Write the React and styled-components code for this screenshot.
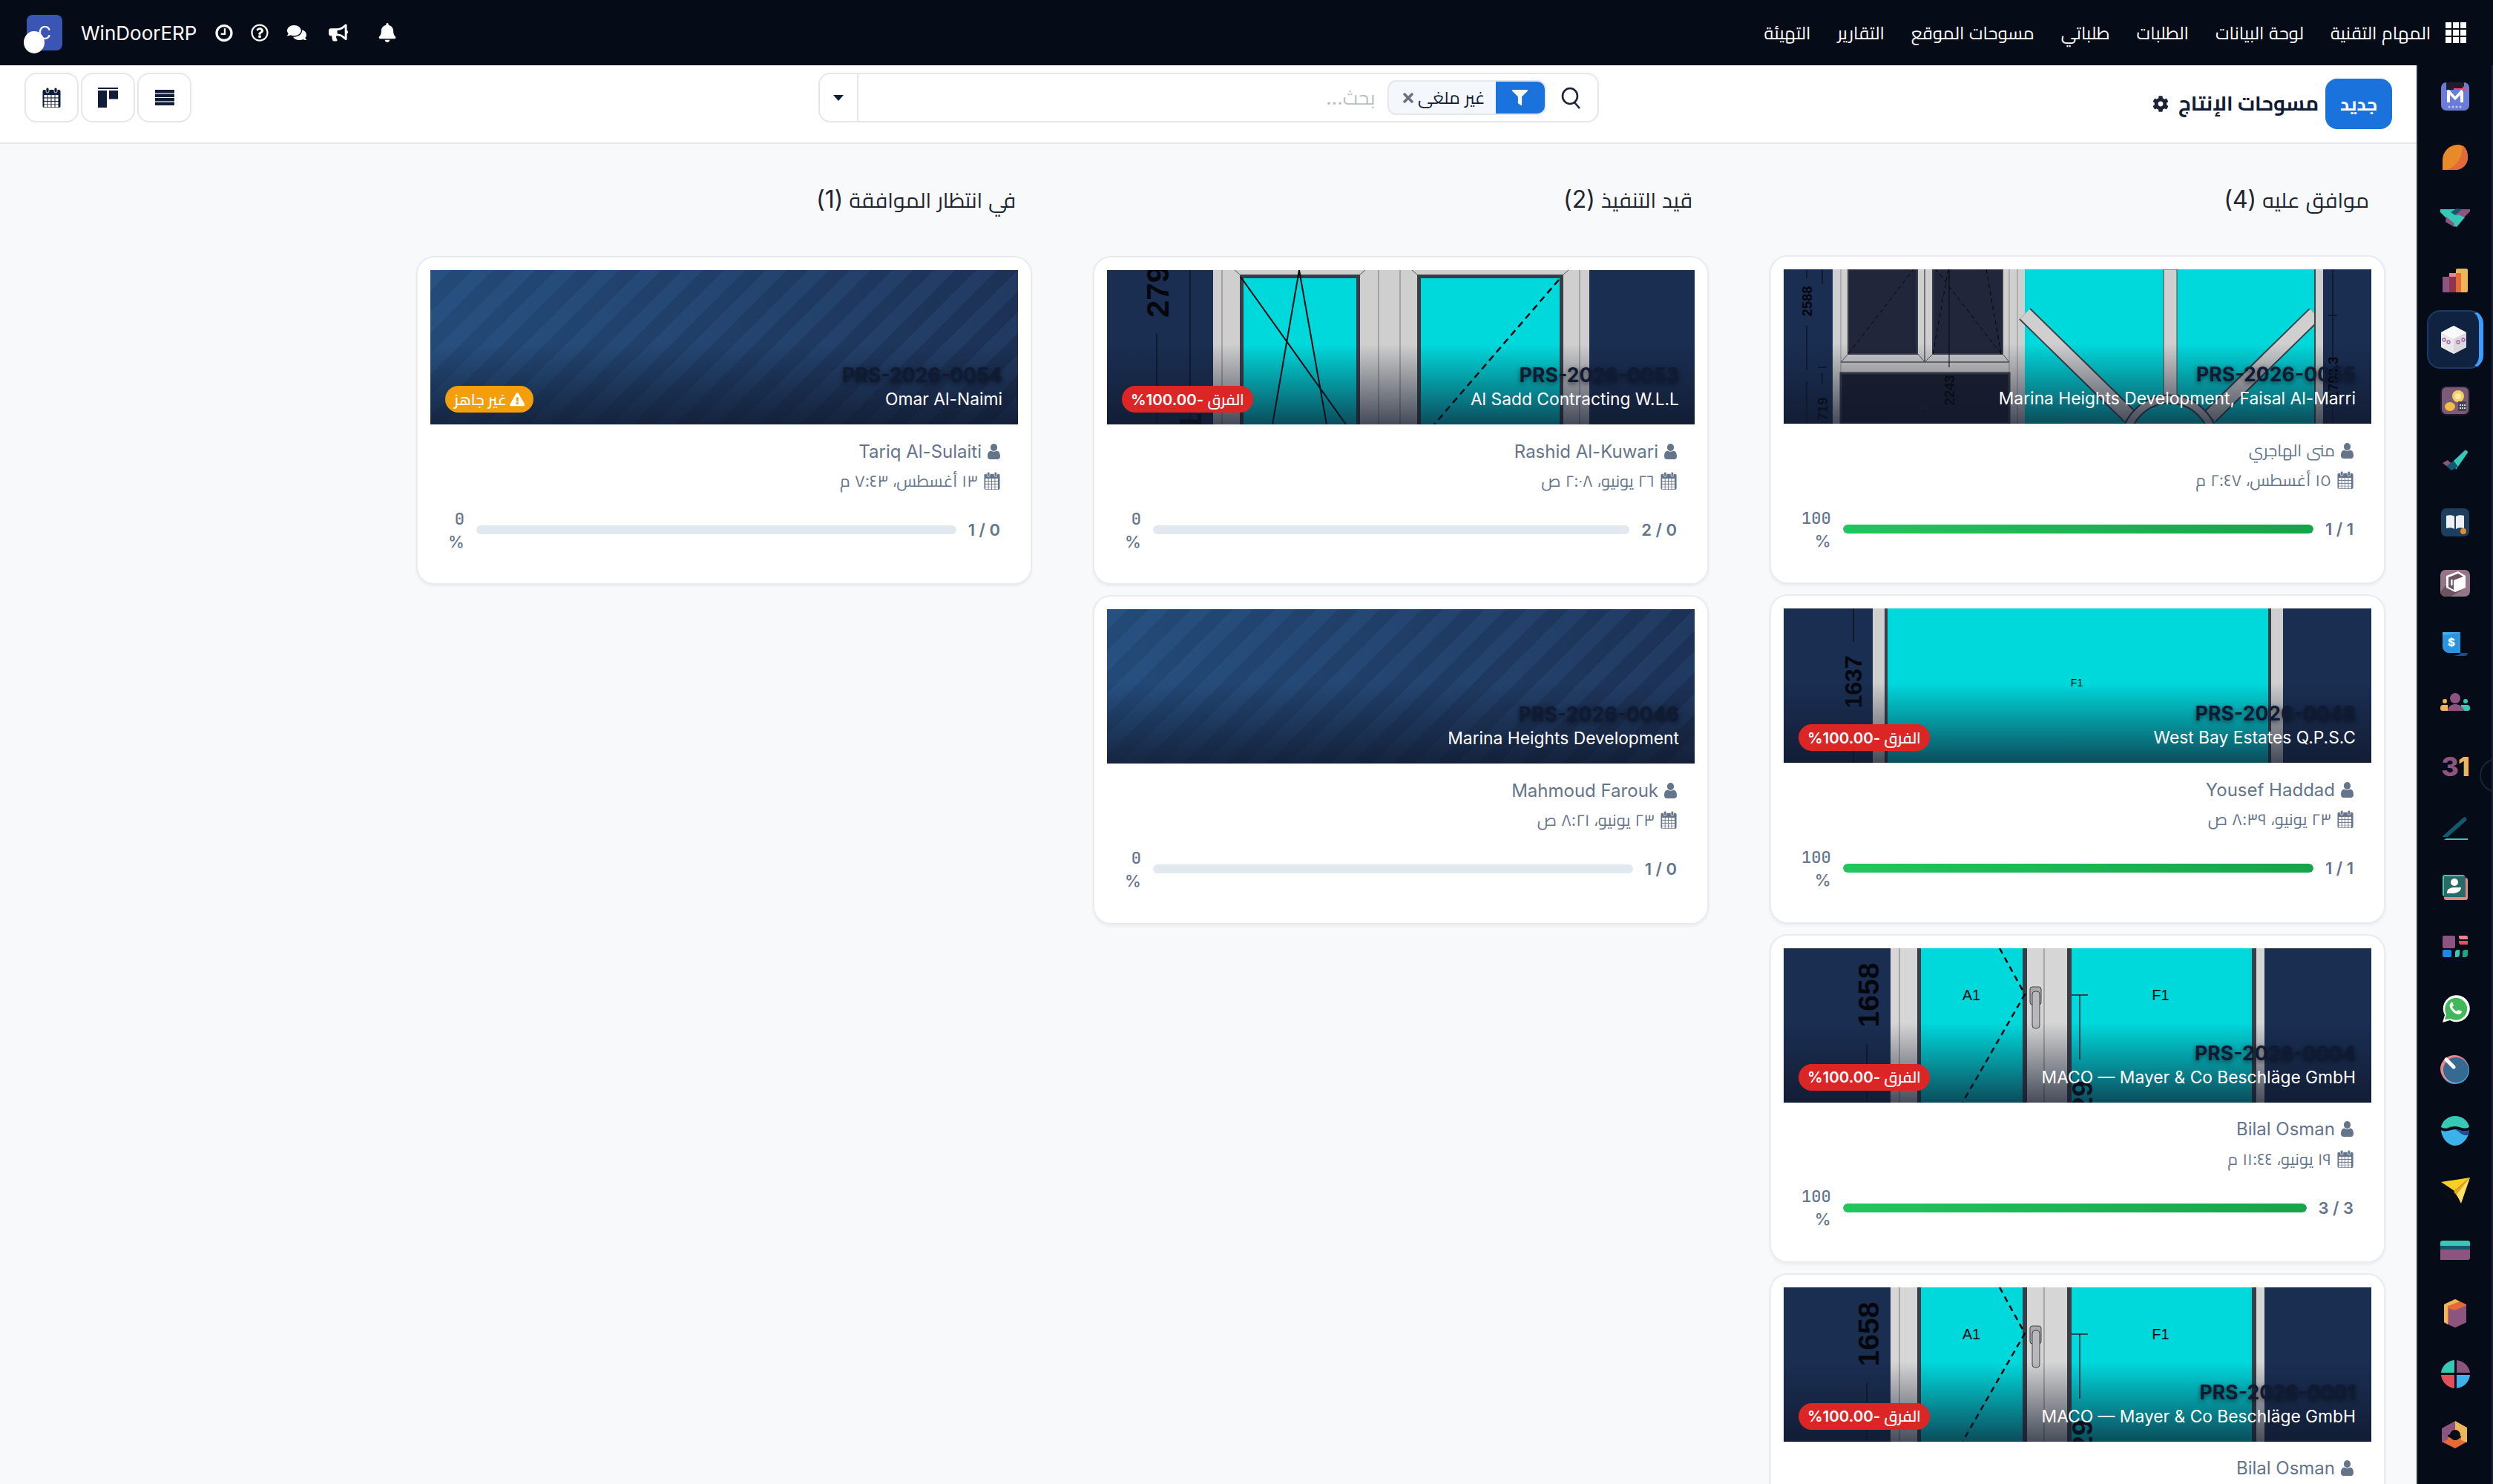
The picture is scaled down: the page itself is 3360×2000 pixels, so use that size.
import React from "react";
import styled, { createGlobalStyle } from "styled-components";
import { FaRegQuestionCircle, FaComments, FaBullhorn, FaBell, FaCog, FaFilter, FaTimes, FaExclamationTriangle } from "react-icons/fa";

const SANS = `Inter, Cairo, "Noto Sans", sans-serif`;
const Global = createGlobalStyle`
  html, body { margin: 0; padding: 0; height: 100%; background: #f8f9fb; }
  * { box-sizing: border-box; }
  body { font-family: ${SANS}; }
  button, input { font-family: ${SANS}; }
`;

const Shell = styled.div`
  width: 3360px; height: 2000px; overflow: hidden; display: flex; flex-direction: column; direction: rtl;
`;
const Topbar = styled.header`
  height: 88px; flex: none; background: #060b18; color: #fff; display: flex; align-items: center;
  justify-content: space-between; padding: 0 36px;
`;
const Nav = styled.nav`display: flex; align-items: center; gap: 36px; font-size: 23.6px;`;
const AppsGrid = styled.span`
  width: 28px; height: 29px; display: grid; grid-template-columns: repeat(3, 1fr); grid-template-rows: repeat(3, 1fr); gap: 2px; margin-inline-end: -16px;
  i { background: #fff; display: block; }
`;
const NavLink = styled.span`color: #fff; white-space: nowrap;`;
const BrandGroup = styled.div`direction: ltr; display: flex; align-items: center;`;
const Logo = styled.div`
  position: relative; width: 48px; height: 48px; border-radius: 8px; background: #3b55b5; color: #fff;
  display: flex; align-items: center; justify-content: center; font-size: 24px;
`;
const LogoDot = styled.span`
  position: absolute; left: -4px; top: 22px; width: 28px; height: 30px; border-radius: 50%; background: #fff;
`;
const Brand = styled.span`font-size: 26px; margin: 0 25px; white-space: nowrap;`;
const TopIcon = styled.span`
  width: ${p => p.$w}px; margin-left: ${p => p.$ml || 0}px; display: flex; justify-content: center; font-size: 26px; color: #fff;
`;

const Body = styled.div`flex: 1; min-height: 0; display: flex;`;
const Rail = styled.aside`
  position: relative; width: 103px; flex: none; background: #060b18; border-left: 2px solid #1d2436; border-right: 2px solid #1d2436;
  display: flex; flex-direction: column; align-items: center; gap: 3px; padding-top: 2px; overflow: hidden;
`;
const RailItem = styled.div`
  width: 76px; height: 79px; flex: none; display: flex; align-items: center; justify-content: center; border-radius: 18px;
  ${p => p.$active && `background: #0f2340; border: 2px solid #1a3a63; border-right: 6px solid #3b9dff;`}
`;
const RailHandle = styled.span`
  position: absolute; top: 934px; right: -30px; width: 46px; height: 46px; border-radius: 50%; border: 2px solid #1d2436;
`;
const Content = styled.div`flex: 1; min-width: 0; display: flex; flex-direction: column;`;
const Toolbar = styled.div`
  height: 106px; flex: none; background: #fff; border-bottom: 2px solid #e5e7eb; display: grid;
  grid-template-columns: 1fr 1052px 1fr; align-items: start; padding: 10px 33px 0;
`;
const TitleGroup = styled.div`display: flex; align-items: center; gap: 9px; margin-top: 8px;`;
const NewButton = styled.button`
  width: 90px; height: 68px; border: 0; border-radius: 16px; background: #1a73dd; color: #fff; font-weight: 700; font-size: 24.5px; padding: 0;
`;
const PageTitle = styled.h1`margin: 0; padding-bottom: 3px; font-size: 27.4px; font-weight: 700; color: #111c36; white-space: nowrap;`;
const Gear = styled.span`display: flex; font-size: 22px; color: #1c2334; margin-right: 4px;`;
const Search = styled.div`
  height: 67px; width: 1052px; background: #fff; border: 2px solid #e5e7eb; border-radius: 16px; display: flex; align-items: center; overflow: hidden;
`;
const SearchIcon = styled.span`width: 69px; flex: none; display: flex; justify-content: center; color: #1c2334;`;
const Facet = styled.div`
  height: 47px; width: 214px; flex: none; display: flex; align-items: center; border-radius: 12px; border: 2px solid #e5e7eb; background: #f4f7fc; overflow: hidden;
`;
const FacetIcon = styled.span`
  width: 66px; height: 100%; background: #1a73dd; color: #fff; display: flex; align-items: center; justify-content: center; font-size: 21px; flex: none;
`;
const FacetLabel = styled.span`font-size: 23px; color: #111c36; margin-right: 14px; white-space: nowrap;`;
const FacetClose = styled.span`display: flex; color: #6b7280; font-size: 20px; margin-right: auto; margin-left: 16px;`;
const SearchInput = styled.input`
  flex: 1; min-width: 0; height: 100%; border: 0; outline: 0; background: transparent; padding: 0 16px; font-size: 26px; direction: rtl;
  &::placeholder { color: #b9bdc5; opacity: 1; }
`;
const DropToggle = styled.span`
  width: 52px; height: 100%; flex: none; border-right: 2px solid #e5e7eb; display: flex; align-items: center; justify-content: center;
  &::before { content: ""; border-top: 8px solid #111c36; border-left: 7px solid transparent; border-right: 7px solid transparent; }
`;
const ViewButtons = styled.div`display: flex; gap: 3px; direction: ltr;`;
const ViewButton = styled.button`
  width: 73px; height: 67px; background: #fff; border: 2px solid #e5e7eb; border-radius: 16px; padding: 0; display: flex; align-items: center; justify-content: center;
`;
const Board = styled.main`
  flex: 1; min-height: 0; overflow: hidden; display: flex; gap: 82px; padding: 52px 42px 0 0;
`;
const Column = styled.section`width: 830px; flex: none; display: flex; flex-direction: column; gap: 14px;`;
const ColumnHead = styled.h2`
  margin: 0 22px 37px 0; height: 48px; line-height: 46px; font-size: 28.5px; font-weight: 400; color: #1f2430; white-space: nowrap;
`;
const HeadCount = styled.span`font-size: 32px;`;
const Card = styled.article`
  width: 830px; height: 443.33px; flex: none; background: #fff; border: 2px solid #e9ebef; border-radius: 24px; padding: 17px;
  box-shadow: 0 2px 4px rgba(15,23,42,.06);
`;
const Thumb = styled.div`
  position: relative; height: 208px; overflow: hidden; background: #1a2e52;
  ${p => p.$empty && `background: repeating-linear-gradient(135deg, rgba(80,150,220,.09) 0 20px, transparent 20px 40px), linear-gradient(100deg, #234a78, #1c3054);`}
  svg { display: block; }
`;
const Shade = styled.div`
  position: absolute; inset: 0; background: linear-gradient(to top, rgba(15,23,42,.72) 0, rgba(15,23,42,0) 52%);
`;
const ThumbText = styled.div`
  position: absolute; right: 21px; bottom: 18px; display: flex; flex-direction: column; align-items: flex-start;
`;
const Ref = styled.div`
  font-size: 26.6px; line-height: 34px; font-weight: 700; color: #0f1a35; text-shadow: 0 2px 6px rgba(0,0,0,.6); white-space: nowrap;
`;
const Client = styled.div`font-size: 22.8px; line-height: 32px; color: #fff; white-space: nowrap;`;
const Badge = styled.span`
  position: absolute; left: 20px; bottom: 16px; height: 36px; padding: 0 12px; border-radius: 18px; background: ${p => p.$bg}; color: #fff;
  display: flex; align-items: center; gap: 4px; font-size: 20.5px; font-weight: 600; white-space: nowrap;
`;
const Details = styled.div`padding: 21px 24px 0; display: flex; flex-direction: column; gap: 10px;`;
const InfoRow = styled.div`
  height: 30px; display: flex; align-items: center; gap: 8px; color: #64748b; font-size: ${p => p.$size}px; white-space: nowrap;
`;
const Progress = styled.div`display: flex; align-items: center; gap: 16px; margin-top: 11px; height: 60px;`;
const Count = styled.span`font-size: 22px; font-weight: 600; color: #64748b; white-space: nowrap; flex: none;`;
const Track = styled.div`flex: 1; height: 12px; border-radius: 6px; background: #e2e8f0; overflow: hidden;`;
const Fill = styled.div`height: 100%; border-radius: 6px; background: linear-gradient(270deg, #16a34a, #22c55e);`;
const Percent = styled.span`
  width: min-content; flex: none; font-size: 22px; line-height: 30px; font-weight: 500; color: #64748b; text-align: right;
`;
const PercentValue = styled.span`font-family: "JetBrains Mono", "IBM Plex Mono", "Liberation Mono", monospace;`;

/* --- small icons --- */
const ClockIcon = () => (
  <svg width="25" height="25" viewBox="0 0 25 25" fill="none" stroke="#fff"><circle cx="12.5" cy="12.5" r="10.4" strokeWidth="3.4"/><path d="M13.5 6v8H8" strokeWidth="2.4"/></svg>
);
const SearchGlyph = () => (
  <svg width="28" height="30" viewBox="0 0 28 30" fill="none" stroke="#1c2334" strokeWidth="2.6"><ellipse cx="12" cy="12.5" rx="10" ry="10.5"/><path d="M18 21l7 8"/></svg>
);
const CalGlyph = ({ c = "#111c36", w = 25, h = 27 }) => (
  <svg width={w} height={h} viewBox="0 0 25 27"><rect x="0.5" y="3" width="24" height="24" rx="2" fill={c}/><rect x="5" y="0" width="4" height="7" rx="2" fill={c} stroke="#fff" strokeWidth=".8"/><rect x="16" y="0" width="4" height="7" rx="2" fill={c} stroke="#fff" strokeWidth=".8"/>
    <g fill="#fff">{[10, 14.5, 19, 23].map(y => [2.5, 7.5, 12.5, 17.5].map(x => <rect key={x + "-" + y} x={x} y={y} width="4" height="3.4"/>))}</g></svg>
);
const KanbanGlyph = () => (
  <svg width="27" height="27" viewBox="0 0 27 27" fill="#111c36"><rect width="27" height="2"/><rect y="4" width="12" height="23"/><rect x="15" y="4" width="12" height="11.5"/></svg>
);
const ListGlyph = () => (
  <svg width="26" height="21" viewBox="0 0 26 21" fill="#111c36"><rect width="26" height="4.4"/><rect y="5.6" width="26" height="4.4"/><rect y="11" width="26" height="4.4"/><rect y="16.6" width="26" height="4.4"/></svg>
);
const UserGlyph = () => (
  <svg width="17" height="21" viewBox="0 0 17 21" fill="#64748b"><ellipse cx="8.5" cy="5" rx="4.6" ry="5"/><path d="M0 17c0-5 2-7 4.500-7.500C6 11 11 11 12.500 9.500 15 10 17 12 17 17c0 2.500-1.500 4-3.500 4h-10C1.500 21 0 19.500 0 17z"/></svg>
);

/* --- rail app icons --- */
const T = { teal: "#35c9b6", mauve: "#8c5580", deep: "#12586e", gold: "#eeb658", or: "#e46a36", rose: "#e8858a", blue: "#3bb3ea", navy: "#1f4a94" };
const railIcons = [
  <><rect x="1" y="1" width="38" height="38" rx="7" fill="#6a7bd8"/><path d="M8 1h24v10H8z" fill="#1b1f2c"/><path d="M9 28V12l3-1 8 9 8-9 3 1v16h-4V18l-7 7-7-7v10z" fill="#fff"/><path d="M18 9h12V6l6 4-6 4v-3H18z" fill="#e8506a"/><g fill="#c5cbee"><circle cx="12" cy="34" r="1.500"/><circle cx="17" cy="34" r="1.500"/><circle cx="22" cy="34" r="1.500"/><circle cx="27" cy="34" r="1.500"/></g></>,
  <><path d="M3 37V24C3 11 14 3 24 3c8 0 13 8 13 17 0 10-8 17-17 17z" fill="#e88a2a"/><path d="M30 4c5 3 7 9 7 16 0 10-8 17-17 17H3c14 0 27-12 27-33z" fill="#e2693a"/></>,
  <><path d="M0 8h20l12 10-14 12L0 12z" fill={T.teal} /><path d="M20 8h20v3L29 22l-9-8z" fill={T.mauve}/><path d="M8 18l14 12 -3 2-12-7z" fill={T.mauve}/><path d="M14 12l8-5 7 1-9 8z" fill={T.deep}/><path d="M24 15l9 4-11 13-4-2z" fill={T.teal}/></>,
  <><path d="M3 17h9v21H3z" fill={T.mauve}/><rect x="12" y="12" width="9" height="26" fill="#8e3350"/><path d="M12 12h12v26h-3V17h-9z" fill={T.rose}/><rect x="21" y="6" width="16" height="32" rx="2" fill={T.gold}/><path d="M21 12h7v26h-7z" fill={T.or}/></>,
  <><path d="M20 1l17 9v20L20 39 3 30V10z" fill="#e8e8ea"/><path d="M20 1l17 9-17 9-17-9z" fill="#fafafa"/><path d="M20 19l17-9v20L20 39z" fill="#d9d9dd"/><g fill="none" stroke="#a8589e" strokeWidth="1.300"><circle cx="7" cy="20" r="2"/><circle cx="13" cy="23" r="2"/><circle cx="26" cy="23" r="2"/><circle cx="33" cy="20" r="2"/></g></>,
  <><rect x="1" y="1" width="38" height="38" rx="7" fill="#7d5a78" stroke="#1b1b2c" strokeWidth="2"/><circle cx="24" cy="14" r="8" fill="#f4cf63"/><circle cx="24" cy="14" r="4" fill="#fbe8ab"/><ellipse cx="13" cy="28" rx="7" ry="6" fill="#f1bf43"/><rect x="24" y="21" width="11" height="13" fill="#3e4450"/><g fill="#d7dbe0"><rect x="26" y="25" width="2" height="2"/><rect x="29" y="25" width="2" height="2"/><rect x="32" y="25" width="2" height="2"/><rect x="26" y="29" width="2" height="2"/><rect x="29" y="29" width="2" height="2"/><rect x="32" y="29" width="2" height="2"/></g></>,
  <><path d="M3 22l7-4 9 9-7 2z" fill={T.mauve}/><path d="M18 19L33 5c2-1 4 1 4 3L21 31z" fill={T.teal}/><path d="M8 26l10-7 6 8-9 5z" fill={T.deep}/></>,
  <><rect x="1" y="1" width="38" height="38" rx="7" fill="#1d3e5c"/><path d="M8 11c4-1 8-1 11 1v17c-3-2-7-2-11-1z" fill="#eef1f4"/><path d="M32 11c-4-1-8-1-11 1v17c3-2 7-2 11-1z" fill="#eef1f4"/><circle cx="31" cy="32" r="4" fill="#e88a2a"/></>,
  <><rect x="0" y="2" width="40" height="36" rx="7" fill="#947686"/><path d="M0 32L14 14l14 16-14 8H7a7 7 0 0 1-7-6z" fill="#6d5260"/><path d="M8 10l16-6 10 6v16l-14 6-12-6z" fill="#fff"/><path d="M11 12l13-5 7 4-13 5v13l-7-4z" fill="#6d5260"/><rect x="14" y="15" width="2.500" height="8" fill="#fff"/></>,
  <><path d="M3 4h24v28H12a9 9 0 0 1-9-9z" fill="#3bb3ea"/><path d="M3 8c12-1 18-2 24-4v28H12a9 9 0 0 1-9-9z" fill="#2a95de"/><path d="M14 36c8 0 12-2 13-4h10c0 2-2 4-4 4z" fill="#1f4a94"/><text x="15" y="23" textAnchor="middle" fontFamily="Inter, sans-serif" fontWeight="800" fontSize="15" fill="#fff">$</text></>,
  <><circle cx="20" cy="11" r="7" fill={T.mauve}/><circle cx="6" cy="15" r="3" fill={T.gold}/><circle cx="34" cy="15" r="3" fill={T.teal}/><path d="M0 24a4 4 0 0 1 4-4h6v8H3a3 3 0 0 1-3-3z" fill={T.gold}/><path d="M36 20a4 4 0 0 1 4 4v1a3 3 0 0 1-3 3H28v-8z" fill={T.teal}/><path d="M10 28c0-5 4-9 10-9s10 4 13 9z" fill={T.mauve}/></>,
  <text x="20" y="34" textAnchor="middle" fontFamily="Inter, sans-serif" fontWeight="800" fontSize="36" fill={T.gold} letterSpacing="-1"><tspan fill={T.mauve}>3</tspan><tspan fill={T.gold}>1</tspan></text>,
  <><path d="M3 33L31 8c2-2 6 1 4 4L10 34H3z" fill={T.deep}/><path d="M8 36h29v2H5z" fill={T.teal}/></>,
  <><rect x="3" y="5" width="32" height="30" rx="3" fill="#e8858a" transform="translate(2 2)"/><rect x="3" y="3" width="30" height="29" rx="3" fill={T.teal}/><rect x="5" y="5" width="29" height="28" fill="#286b66"/><circle cx="19" cy="13" r="5" fill="#fff"/><path d="M9 26c1-5 6-6 11-6h8c0 6-7 8-12 8H9z" fill="#fff"/></>,
  <><rect x="3" y="3" width="17" height="17" rx="2" fill={T.mauve}/><path d="M25 3h10a2 2 0 0 1 2 2v3H27a3 3 0 0 1-2-3z" fill={T.rose}/><path d="M25 10h12v5H28a3 3 0 0 1-3-3z" fill="#e1505b"/><rect x="3" y="22" width="12" height="10" rx="2" fill="#1e88e5"/><path d="M20 26a4 4 0 0 1 4-4h2v6a4 4 0 0 1-4 4h-2z" fill={T.teal}/><path d="M30 26a4 4 0 0 1 4-4h3v6a4 4 0 0 1-4 4h-3z" fill="#1aa784"/></>,
  <><path d="M3 38l3-10a18 18 0 1 1 7 7z" fill="#fff"/><path d="M6 34l2-7a15 15 0 1 1 6 6z" fill="#43b85a"/><path d="M14 12c-2 2-2 5 1 9s6 6 10 6c2 0 4-2 4-4l-5-2-2 2c-2-1-5-4-6-6l2-2-2-5z" fill="#fff"/></>,
  <><ellipse cx="20" cy="20" rx="19" ry="19" fill={T.blue}/><ellipse cx="19" cy="18.500" rx="19" ry="18.500" fill="#e8858a"/><ellipse cx="21" cy="20" rx="17" ry="17" fill="#376a90"/><path d="M8 6l10 10" stroke="#fff" strokeWidth="5" strokeLinecap="round"/></>,
  <><path d="M1 15C3 5 12 0 20 0s17 5 19 15c-8 4-12-1-19-1S8 19 1 15z" fill={T.teal}/><path d="M1 15c7 4 9-1 15-1-6 3-9 5-15 1z" fill="#2c7c72"/><path d="M1 19c7 4 13-1 19-1s12 5 19 1c-1 12-10 21-19 21S2 31 1 19z" fill={T.blue}/><path d="M20 18c6 0 12 5 19 1 0 3-1 6-2 7-8 1-11-5-17-8z" fill={T.navy}/></>,
  <><path d="M1 7L40 1 19 19z" fill="#f9cf26"/><path d="M40 1L26 30l-8-10z" fill="#e7a925" /><path d="M40 1L28 36l-6-12z" fill="#fbe06b"/><g stroke="#111" strokeWidth="1.200"><path d="M2 18l10 8M6 14l9 8M8 24l6 5M14 22l10 8M12 28l6 4M18 26l6 6"/></g></>,
  <><path d="M0 7a3 3 0 0 1 3-3h34a3 3 0 0 1 3 3v4H0z" fill={T.teal}/><rect y="11" width="40" height="5" fill={T.deep}/><path d="M0 16h40v11a3 3 0 0 1-3 3H0z" fill={T.mauve}/></>,
  <><path d="M20 1l15 7 0 24-15 7-15-7V8z" fill={T.or}/><path d="M5 8l15-7 6 3-16 6v25L5 32z" fill={T.gold}/><path d="M11 13l15-7 9 4v22l-15 7-9-4z" fill={T.mauve}/><path d="M10 13l16-7 9 3-15 7z" fill={T.or}/></>,
  <><path d="M19 1v17H1C2 9 10 2 19 1z" fill={T.teal}/><path d="M22 1c9 1 17 8 18 17H22z" fill={T.mauve}/><path d="M1 21h18v18C10 38 2 31 1 21z" fill="#e1505b"/><path d="M22 21h18c-1 10-9 17-18 18z" fill={T.blue}/></>,
  <><path d="M20 1v14l-11 6-7-4V11z" fill={T.mauve}/><path d="M20 1l16 9v9l-8 3-8-7z" fill={T.gold}/><path d="M2 29l8-7 10 5 10-5 6 7-16 9z" fill={T.or}/><path d="M2 17l8 4v5l-8 4z" fill={T.mauve}/><path d="M36 18l-8 4v5l8 3z" fill={T.gold}/><circle cx="20" cy="20" r="7" fill="#060b18"/></>,
];

/* --- window drawings (SVG pictures inside the thumbnails) --- */
const W = { frame: "#cfcfcf", dark: "#3a3d46", glass: "#00d9dc", ink: "#05070d" };
const Drawing = ({ children }) => <svg width="792" height="208" viewBox="0 0 792 208" fontFamily="Liberation Sans, sans-serif">{children}</svg>;
const Rot = ({ x, y, size, children }) => (
  <text transform={`translate(${x} ${y}) rotate(-90)`} textAnchor="middle" fontWeight="700" fontSize={size} fill={W.ink}>{children}</text>
);
const DrawingA = () => (
  <Drawing>
    <g stroke={W.ink} strokeWidth="1"><path d="M31 0v12M31 76v60M31 150v58M52 0v20M46 132h12M52 140v15M740 0v120M734 62h12M740 175v33"/></g>
    <Rot x={38} y={43} size={18.5}>2588</Rot><Rot x={59} y={188} size={18.5}>719</Rot><Rot x={747} y={146} size={18.5}>1793.3</Rot>
    <rect x="66" width="260" height="208" fill={W.frame}/>
    <path d="M304 0v208M315 0v208M77 0v208" stroke="#8b8d91" strokeWidth="1"/>
    <rect x="87" width="93" height="114" fill="#22263a" stroke={W.dark} strokeWidth="2"/><rect x="201" width="94" height="114" fill="#22263a" stroke={W.dark} strokeWidth="2"/>
    <rect x="77" y="140" width="227" height="68" fill="#1c2030" stroke={W.dark} strokeWidth="3"/>
    <path d="M77 125h227M190 125V0" stroke="#555" strokeWidth="1.500"/><path d="M77 125l10-11M304 125l-9-11M190 125l-9-11M190 125l11-11" stroke="#555"/>
    <g fill="none" stroke={W.ink} strokeDasharray="6 4" strokeWidth="1"><path d="M87 114L175 0M293 114L205 0M201 114L222 0M293 114L273 0"/></g>
    <path d="M223 0v132" stroke={W.ink}/>
    <Rot x={230} y={163} size={18.5}>2243</Rot>
    <text x="190" y="190" fontSize="11" fill="#2b2f3d" textAnchor="middle">F1</text>
    <rect x="325" width="391" height="208" fill={W.glass}/>
    <rect x="512" width="18" height="208" fill={W.frame} stroke="#444" strokeWidth="1"/>
    <path d="M325 60L466 198M716 60L575 198" stroke="#3a3d46" strokeWidth="22"/><path d="M325 60L466 198M716 60L575 198" stroke={W.frame} strokeWidth="18"/>
    <circle cx="520" cy="235" r="60" fill={W.glass} stroke="#3a3d46" strokeWidth="13"/><circle cx="520" cy="235" r="60" fill="none" stroke={W.frame} strokeWidth="9"/>
    <path d="M716 0v208" stroke="#444" strokeWidth="2"/><rect x="717" width="10" height="208" fill={W.frame}/>
  </Drawing>
);
const DrawingB = () => (
  <Drawing>
    <path d="M67 86v122M112 0v208" stroke={W.ink} strokeWidth="1"/>
    <Rot x={83} y={29} size={42}>279</Rot><Rot x={127} y={205} size={42}>1</Rot>
    <rect x="143" width="507" height="208" fill={W.frame}/>
    <path d="M155 0v208M366 0v208M395 0v208M637 0v208" stroke="#777" strokeWidth="1"/>
    <rect x="179" y="6" width="162" height="210" fill="#3a3d46"/><rect x="184" y="11" width="152" height="200" fill={W.glass}/>
    <rect x="418" y="6" width="197" height="210" fill="#3a3d46"/><rect x="423" y="11" width="187" height="200" fill={W.glass}/>
    <path d="M172 0l7 6M348 0l-7 6M411 0l7 6M622 0l-7 6" stroke="#555"/>
    <g fill="none" stroke={W.ink} strokeWidth="2"><path d="M180 9L322 208M259 0L223 208M259 0L296 208"/></g>
    <path d="M609 13L441 208" stroke={W.ink} strokeWidth="2.500" strokeDasharray="9 6"/>
  </Drawing>
);
const DrawingC = () => (
  <Drawing>
    <path d="M94 0v45M94 155v53" stroke={W.ink} strokeWidth="1"/>
    <Rot x={105} y={99} size={32}>1637</Rot>
    <rect x="120" width="16" height="208" fill={W.frame}/><rect x="136" width="4" height="208" fill="#3a3d46"/>
    <rect x="140" width="513" height="208" fill={W.glass}/>
    <rect x="653" width="4" height="208" fill="#3a3d46"/><rect x="657" width="16" height="208" fill={W.frame}/>
    <text x="395" y="105" fontSize="14" fill={W.ink} textAnchor="middle">F1</text>
  </Drawing>
);
const DrawingD = () => (
  <Drawing>
    <path d="M112 129v79" stroke={W.ink} strokeWidth="1"/>
    <Rot x={128} y={63} size={39}>1658</Rot>
    <rect x="144" width="36" height="208" fill="#d6d6d6"/><path d="M156 0v208" stroke="#777"/>
    <rect x="180" width="5" height="208" fill="#3a3d46"/><rect x="185" width="137" height="208" fill={W.glass}/>
    <rect x="322" width="6" height="208" fill="#3a3d46"/><rect x="328" width="54" height="208" fill="#d6d6d6"/><path d="M351 0v208" stroke="#777"/>
    <rect x="382" width="6" height="208" fill="#3a3d46"/><rect x="388" width="243" height="208" fill={W.glass}/>
    <rect x="631" width="6" height="208" fill="#3a3d46"/><rect x="637" width="11" height="208" fill="#d6d6d6"/>
    <text x="253" y="70" fontSize="20" fill={W.ink} textAnchor="middle">A1</text><text x="508" y="70" fontSize="20" fill={W.ink} textAnchor="middle">F1</text>
    <path d="M291 0L325 62L241 208" fill="none" stroke={W.ink} strokeWidth="2.500" strokeDasharray="8 6"/>
    <rect x="332" y="52" width="15" height="24" rx="3" fill="#a9a9ae" stroke="#444"/><rect x="335" y="58" width="10" height="50" rx="4" fill="#b8b8bd" stroke="#444"/>
    <path d="M388 63h22M399 63v87" stroke="#20242c" strokeWidth="1.500"/>
    <Rot x={416} y={200} size={39}>29</Rot>
  </Drawing>
);

const columns = [
  { title: "موافق عليه", n: "(4)", cards: [
    { ref: "PRS-2026-0055", client: "Marina Heights Development, Faisal Al-Marri", user: "منى الهاجري", arName: true, date: "١٥ أغسطس، ٢:٤٧ م", pct: 100, count: "1 / 1", Art: DrawingA },
    { ref: "PRS-2026-0048", client: "West Bay Estates Q.P.S.C", user: "Yousef Haddad", date: "٢٣ يونيو، ٨:٣٩ ص", pct: 100, count: "1 / 1", diff: true, Art: DrawingC },
    { ref: "PRS-2026-0004", client: "MACO — Mayer & Co Beschläge GmbH", user: "Bilal Osman", date: "١٩ يونيو، ١١:٤٤ م", pct: 100, count: "3 / 3", diff: true, Art: DrawingD },
    { ref: "PRS-2026-0001", client: "MACO — Mayer & Co Beschläge GmbH", user: "Bilal Osman", date: "١٩ يونيو، ١١:٤٠ م", pct: 100, count: "3 / 3", diff: true, Art: DrawingD },
  ]},
  { title: "قيد التنفيذ", n: "(2)", cards: [
    { ref: "PRS-2026-0053", client: "Al Sadd Contracting W.L.L", user: "Rashid Al-Kuwari", date: "٢٦ يونيو، ٢:٠٨ ص", pct: 0, count: "0 / 2", diff: true, Art: DrawingB },
    { ref: "PRS-2026-0046", client: "Marina Heights Development", user: "Mahmoud Farouk", date: "٢٣ يونيو، ٨:٢١ ص", pct: 0, count: "0 / 1" },
  ]},
  { title: "في انتظار الموافقة", n: "(1)", cards: [
    { ref: "PRS-2026-0054", client: "Omar Al-Naimi", user: "Tariq Al-Sulaiti", date: "١٣ أغسطس، ٧:٤٣ م", pct: 0, count: "0 / 1", warn: true },
  ]},
];

const navItems = ["المهام التقنية", "لوحة البيانات", "الطلبات", "طلباتي", "مسوحات الموقع", "التقارير", "التهيئة"];

export default function App() {
  return (
    <Shell>
      <Global />
      <Topbar>
        <Nav>
          <AppsGrid>{Array.from({ length: 9 }).map((_, i) => <i key={i} />)}</AppsGrid>
          {navItems.map(n => <NavLink key={n}>{n}</NavLink>)}
        </Nav>
        <BrandGroup>
          <Logo>C<LogoDot /></Logo>
          <Brand>WinDoorERP</Brand>
          <TopIcon $w={24}><ClockIcon /></TopIcon>
          <TopIcon $w={24} $ml={24}><FaRegQuestionCircle /></TopIcon>
          <TopIcon $w={28} $ml={24}><FaComments /></TopIcon>
          <TopIcon $w={28} $ml={28}><FaBullhorn /></TopIcon>
          <TopIcon $w={28} $ml={38}><FaBell /></TopIcon>
        </BrandGroup>
      </Topbar>
      <Body>
        <Rail>
          {railIcons.map((ic, i) => (
            <RailItem key={i} $active={i === 4}>
              <svg width="40" height="40" viewBox="0 0 40 40">{ic}</svg>
            </RailItem>
          ))}
          <RailHandle />
        </Rail>
        <Content>
          <Toolbar>
            <TitleGroup>
              <NewButton>جديد</NewButton>
              <PageTitle>مسوحات الإنتاج</PageTitle>
              <Gear><FaCog /></Gear>
            </TitleGroup>
            <Search>
              <SearchIcon><SearchGlyph /></SearchIcon>
              <Facet>
                <FacetIcon><FaFilter /></FacetIcon>
                <FacetLabel>غير ملغى</FacetLabel>
                <FacetClose><FaTimes /></FacetClose>
              </Facet>
              <SearchInput placeholder="بحث..." />
              <DropToggle />
            </Search>
            <ViewButtons>
              <ViewButton><CalGlyph /></ViewButton>
              <ViewButton><KanbanGlyph /></ViewButton>
              <ViewButton><ListGlyph /></ViewButton>
            </ViewButtons>
          </Toolbar>
          <Board>
            {columns.map(col => (
              <Column key={col.title}>
                <ColumnHead>{col.title} <HeadCount>{col.n}</HeadCount></ColumnHead>
                {col.cards.map(c => (
                  <Card key={c.ref}>
                    <Thumb $empty={!c.Art}>
                      {c.Art && <c.Art />}
                      <Shade />
                      <ThumbText>
                        <Ref>{c.ref}</Ref>
                        <Client>{c.client}</Client>
                      </ThumbText>
                      {c.diff && <Badge $bg="#dc2626">الفرق -100.00%</Badge>}
                      {c.warn && <Badge $bg="#f59e0b"><FaExclamationTriangle />غير جاهز</Badge>}
                    </Thumb>
                    <Details>
                      <InfoRow $size={c.arName ? 22 : 24}><UserGlyph />{c.user}</InfoRow>
                      <InfoRow $size={22}><CalGlyph c="#64748b" w={22} h={24} />{c.date}</InfoRow>
                      <Progress>
                        <Count>{c.count}</Count>
                        <Track><Fill style={{ width: c.pct + "%" }} /></Track>
                        <Percent><PercentValue>{c.pct}</PercentValue> %</Percent>
                      </Progress>
                    </Details>
                  </Card>
                ))}
              </Column>
            ))}
          </Board>
        </Content>
      </Body>
    </Shell>
  );
}
